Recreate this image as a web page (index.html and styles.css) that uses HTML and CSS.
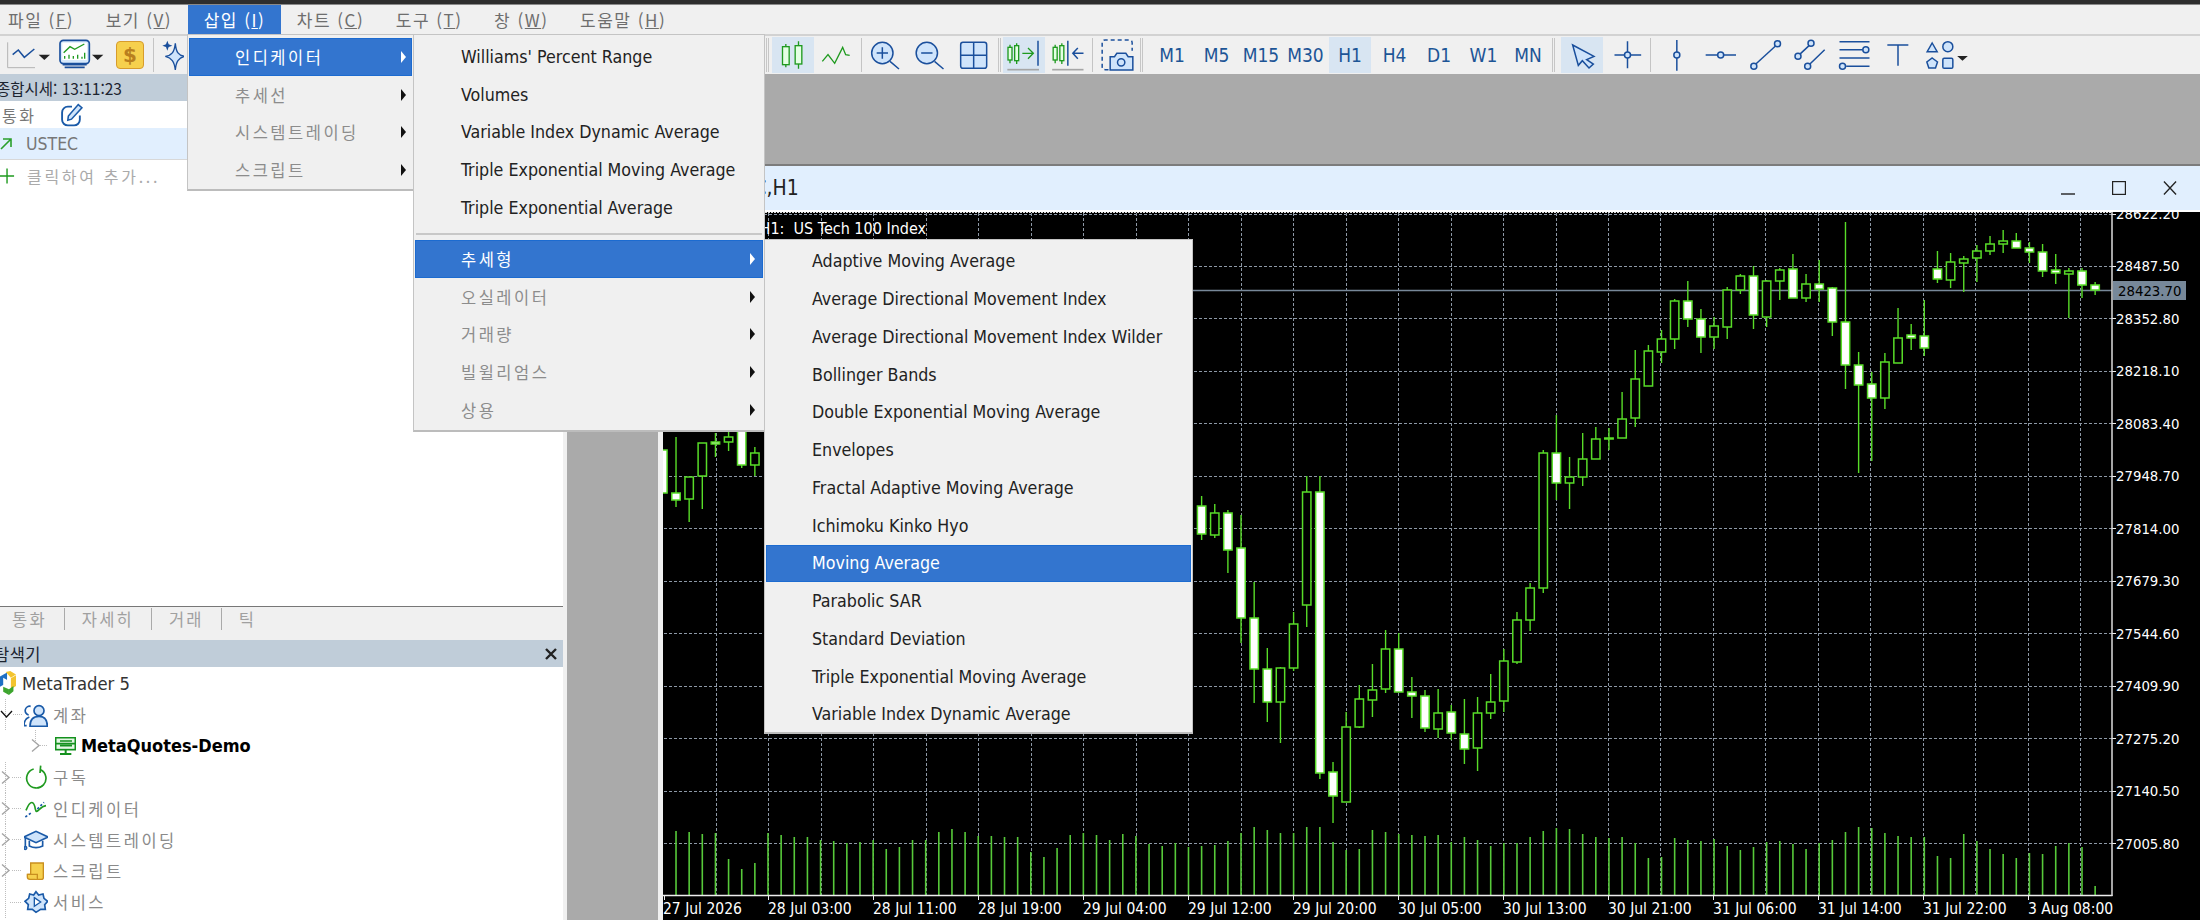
FILE: index.html
```html
<!DOCTYPE html>
<html lang="ko">
<head>
<meta charset="utf-8">
<title>MetaTrader 5</title>
<link rel="stylesheet" href="styles.css">
</head>
<body>
<div class="topstrip"></div>
<nav class="menubar">
  <span class="mb first">파일 (<u>F</u>)</span>
  <span class="mb">보기 (<u>V</u>)</span>
  <span class="mb active">삽입 (<u>I</u>)</span>
  <span class="mb">차트 (<u>C</u>)</span>
  <span class="mb">도구 (<u>T</u>)</span>
  <span class="mb">창 (<u>W</u>)</span>
  <span class="mb">도움말 (<u>H</u>)</span>
</nav>

<div class="toolbar">
  <div class="tb-left">
    <svg class="lt-a" viewBox="18 9 138 105"><path d="M23 25V101H105" class="ax"/><path d="M38 62L55 48L73 70L103 45" class="bl"/><path d="M116 62H150L133 78Z" class="tri"/></svg>
    <svg class="lt-a" viewBox="174 9 138 105"><rect x="180" y="19" width="88" height="70" rx="10" class="mon"/><rect x="187" y="26" width="74" height="52" class="wh"/><path d="M191 56L210 38L224 46L253 30" class="gr"/><path d="M194 74V66M207 74V62M220 74V66M233 74V62M246 74V68M254 74V56" class="gr"/><path d="M188 92H260M194 100H254" class="dk"/><path d="M276 62H310L293 78Z" class="tri"/></svg>
    <div class="dollar">$</div>
    <i class="sep sep-lt"></i>
    <svg class="lt-star" viewBox="495 9 66 105"><path d="M535 28C537 55 545 64 562 67C545 72 537 82 535 108C532 82 524 72 505 67C524 64 532 55 535 28Z" class="star"/><path d="M511 20L515 31L526 35L515 39L511 50L507 39L496 35L507 31Z" class="star2"/></svg>
  </div>
  <div class="tb-right">
    <i class="grip"></i>
    <div class="tool on"><svg viewBox="22.5 9 126 108"><path d="M64 30V100M102 22V104" class="gr"/><rect x="54" y="38" width="20" height="54" class="cd"/><rect x="92" y="35" width="20" height="55" class="cd"/></svg></div>
    <div class="tool"><svg viewBox="156 9 126 108"><path d="M175 82L192 62L212 88L236 40L245 62L257 64" class="gr"/></svg></div>
    <i class="sep"></i>
    <div class="tool"><svg viewBox="300 9 126 108"><circle cx="355" cy="57" r="32" class="bf"/><path d="M355 40V74M338 57H372M378 82L405 105" class="bl"/></svg></div>
    <div class="tool"><svg viewBox="433.5 9 126 108"><circle cx="487" cy="57" r="32" class="bf"/><path d="M470 57H504M510 82L537 105" class="bl"/></svg></div>
    <div class="tool"><svg viewBox="567 9 126 108"><rect x="590" y="25" width="78" height="78" rx="7" class="bf"/><path d="M629 25V103M590 64H668" class="bl"/></svg></div>
    <i class="grip"></i>
    <div class="tool on"><svg viewBox="717 9 126 108"><path d="M738 32V88M758 28V90" class="gr"/><rect x="732" y="40" width="12" height="38" class="cd"/><rect x="752" y="35" width="12" height="45" class="cd"/><path d="M775 58H808M792 42L808 58L792 74" class="gr"/><path d="M822 20V95" class="bl"/><path d="M730 107H825" class="und"/></svg></div>
    <div class="tool"><svg viewBox="850.5 9 126 108"><path d="M872 32V88M892 28V90" class="gr"/><rect x="866" y="40" width="12" height="38" class="cd"/><rect x="886" y="35" width="12" height="45" class="cd"/><path d="M910 20V95M957 58H925M940 42L925 58L940 74" class="bl"/><path d="M863 107H957" class="und"/></svg></div>
    <i class="sep"></i>
    <div class="tool"><svg viewBox="994.5 9 126 108"><path d="M1032 107H1022Q1013 107 1013 98V27Q1013 18 1022 18H1094Q1103 18 1103 27V50" class="dash"/><path d="M1037 68H1050L1057 58H1084L1091 68H1105V108H1037Z" class="bf"/><circle cx="1070" cy="85" r="11" class="bl"/></svg></div>
    <i class="grip"></i>
    <div class="tf">M1</div><div class="tf">M5</div><div class="tf">M15</div><div class="tf">M30</div><div class="tf on">H1</div><div class="tf">H4</div><div class="tf">D1</div><div class="tf">W1</div><div class="tf">MN</div>
    <i class="grip"></i>
    <div class="tool on cursor"><svg viewBox="21 9 126 108"><path d="M56 33L120 67L98 77L118 90L105 102L85 80L73 94Z" class="bf"/></svg></div>
    <div class="tool"><svg viewBox="154.5 9 126 108"><path d="M180 63H260M219 22V103" class="bl"/><circle cx="219" cy="63" r="9" class="bf"/></svg></div>
    <i class="sep"></i>
    <div class="tool"><svg viewBox="298.5 9 126 108"><path d="M367 18V110" class="bl"/><circle cx="367" cy="63" r="9" class="bf"/></svg></div>
    <div class="tool"><svg viewBox="432 9 126 108"><path d="M455 63H546" class="bl"/><circle cx="500" cy="63" r="9" class="bf"/></svg></div>
    <div class="tool"><svg viewBox="565.5 9 126 108"><path d="M604 90L663 36" class="bl"/><circle cx="598" cy="97" r="9" class="bf"/><circle cx="669" cy="29" r="9" class="bf"/></svg></div>
    <div class="tool"><svg viewBox="699 9 126 108"><path d="M737 61L766 34M767 91L812 47" class="bl"/><circle cx="732" cy="67" r="9" class="bf"/><circle cx="771" cy="28" r="9" class="bf"/><circle cx="761" cy="97" r="9" class="bf"/></svg></div>
    <div class="tool"><svg viewBox="832.5 9 126 108"><path d="M855 23H945M855 47H925M855 72H945M875 97H945" class="bl"/><circle cx="934" cy="47" r="9" class="bf"/><circle cx="864" cy="97" r="9" class="bf"/></svg></div>
    <div class="tool"><svg viewBox="966 9 126 108"><path d="M1000 33H1063M1032 33V95" class="bl"/></svg></div>
    <div class="tool wide"><svg viewBox="1099.5 9 156 108"><path d="M1133 27L1148 53H1118Z" class="bf"/><circle cx="1180" cy="38" r="15" class="bf"/><path d="M1133 72L1149 84L1143 102H1123L1117 84Z" class="bf"/><rect x="1165" y="73" width="30" height="30" rx="4" class="bf"/><path d="M1208 66H1240L1224 80Z" class="tri"/></svg></div>
  </div>
</div>

<div class="work">
  <aside class="side">
    <section class="quotes">
      <header class="band">종합시세: 13:11:23</header>
      <div class="q-head"><span class="ko">통화</span>
        <svg class="pencil" viewBox="0 0 22 23"><path d="M11 3.500H7A5.500 5.500 0 0 0 1.500 9V16A5.500 5.500 0 0 0 7 21.500H13A5.500 5.500 0 0 0 18.500 16V12" class="pen"/><path d="M17 1.500L20.500 4.500L10.500 15.500L7 16.500L7.500 12.500Z" class="penb"/></svg>
      </div>
      <div class="q-row"><svg class="trend" viewBox="0 0 13 13"><path d="M1 12L11 2M3 2H11V10" class="up"/></svg><span>USTEC</span></div>
      <div class="q-add"><svg class="plus" viewBox="0 0 16 16"><path d="M0 8H15M7.500 0V16" class="plusp"/></svg><span class="ko">클릭하여 추가...</span></div>
    </section>
    <div class="tabs">
      <span class="tab t1">통화</span><span class="tab t2">자세히</span><span class="tab t3">거래</span><span class="tab t4">틱</span>
    </div>
    <section class="nav">
      <header class="band nav-head"><span>탐색기</span><svg class="navx" viewBox="0 0 12 12"><path d="M1 1L11 11M11 1L1 11" class="xp"/></svg></header>
      <div class="row root">
        <svg class="logo" viewBox="0 15 50 75"><path d="M0 32L22 20V52L0 64Z" class="lg-b"/><path d="M18 18L32 15L50 26L34 36Z" class="lg-y"/><path d="M34 38L50 28V62L34 72Z" class="lg-y"/><path d="M10 64L28 72V90L10 80Z" class="lg-g"/><path d="M28 72L42 62V78L28 90Z" class="lg-g"/><path d="M10 36L24 44V66L10 58Z" class="lg-w"/></svg>
        <span class="dark">MetaTrader 5</span>
      </div>
      <div class="row">
        <svg class="twig" viewBox="0 0 24 31.300"><path d="M5.500 0V31.300M13 15.500H22" class="dots"/><path d="M1 12L6.500 18L12 12" class="chev-o"/></svg>
        <svg class="ico" viewBox="72 112 72 72"><circle cx="117" cy="135" r="15" class="u1"/><path d="M90 182Q90 152 117 152Q142 152 142 182Z" class="u1"/><path d="M92 122A13 13 0 0 0 86 148M80 180H72Q72 160 88 154" class="u2"/></svg>
        <span class="ko">계좌</span>
      </div>
      <div class="row sub">
        <svg class="twig" viewBox="0 0 24 31.300"><path d="M5.500 0V14M10 15.500H18" class="dots"/><path d="M2 9.500L9 15.500L2 21.500" class="chev"/></svg>
        <svg class="srv" viewBox="165 215 63 54"><rect x="167" y="217" width="59" height="36" class="sv"/><path d="M180 227H216M180 241H216M167 235H226" class="svl"/><path d="M197 253V263M180 266H214" class="svs"/></svg>
        <span class="bold">MetaQuotes-Demo</span>
      </div>
      <div class="row">
        <svg class="twig" viewBox="0 0 24 31.300"><path d="M5.500 0V31.300M12 15.500H22" class="dots"/><path d="M2 9.500L9 15.500L2 21.500" class="chev"/></svg>
        <svg class="ico" viewBox="72 302 72 72"><path d="M101 314A29 29 0 1 0 122 316M122 304L120 326" class="arcg"/></svg>
        <span class="ko">구독</span>
      </div>
      <div class="row">
        <svg class="twig" viewBox="0 0 24 31.300"><path d="M5.500 0V31.300M12 15.500H22" class="dots"/><path d="M2 9.500L9 15.500L2 21.500" class="chev"/></svg>
        <svg class="ico" viewBox="72 392 72 72"><path d="M78 432C92 398 102 405 106 428C110 448 118 420 138 418" class="arcg"/><path d="M76 452L96 438M112 428L132 408" class="dashb"/></svg>
        <span class="ko">인디케이터</span>
      </div>
      <div class="row">
        <svg class="twig" viewBox="0 0 24 31.300"><path d="M5.500 0V31.300M12 15.500H22" class="dots"/><path d="M2 9.500L9 15.500L2 21.500" class="chev"/></svg>
        <svg class="ico" viewBox="72 488 72 72"><path d="M72 515L108 498L144 515L108 532Z" class="bf2"/><path d="M88 526V542Q108 552 128 542V526" class="bl2"/><path d="M76 517V542" class="bl2"/><circle cx="76" cy="548" r="4" class="bf2"/></svg>
        <span class="ko">시스템트레이딩</span>
      </div>
      <div class="row">
        <svg class="twig" viewBox="0 0 24 31.300"><path d="M5.500 0V31.300M12 15.500H22" class="dots"/><path d="M2 9.500L9 15.500L2 21.500" class="chev"/></svg>
        <svg class="ico" viewBox="68 580 72 72"><path d="M88 592H126V636Q126 641 120 641H86Q78 641 78 634V626H88Z" class="scr"/><path d="M78 626H108V641" class="scr"/></svg>
        <span class="ko">스크립트</span>
      </div>
      <div class="row">
        <svg class="twig" viewBox="0 0 24 31.300"><path d="M5.500 0V31.300M10 15.500H22" class="dots"/></svg>
        <svg class="ico" viewBox="70 669 72 72"><path d="M106 674L114 684L127 681L130 694L141 703L132 713L134 727L120 727L106 736L95 727L81 727L83 713L73 703L84 694L87 681L99 684Z" class="bf2"/><path d="M101 692L120 705L101 718Z" class="bf3"/></svg>
        <span class="ko">서비스</span>
      </div>
    </section>
  </aside>
  <i class="splitter"></i>
  <main class="mdi">
    <div class="win">
      <div class="win-title">
        <span class="win-name">USTEC,H1</span>
        <div class="win-btns">
          <svg viewBox="0 0 14 14"><path d="M0 13H14" class="wb"/></svg>
          <svg viewBox="0 0 14 14"><rect x="0.500" y="0.500" width="13" height="13" class="wb"/></svg>
          <svg viewBox="0 0 15 14"><path d="M1 0L14 14M14 0L1 14" class="wb"/></svg>
        </div>
      </div>
      <svg class="chart" viewBox="663 212 1537 708">
        <g id="plot"></g>
        <text x="926" y="234" text-anchor="end" class="ct">USTEC,H1:&#160; US Tech 100 Index</text>
        <g class="ct cp">
          <text x="2116" y="219">28622.20</text>
          <text x="2116" y="271">28487.50</text>
          <text x="2116" y="324">28352.80</text>
          <text x="2116" y="376">28218.10</text>
          <text x="2116" y="429">28083.40</text>
          <text x="2116" y="481">27948.70</text>
          <text x="2116" y="534">27814.00</text>
          <text x="2116" y="586">27679.30</text>
          <text x="2116" y="639">27544.60</text>
          <text x="2116" y="691">27409.90</text>
          <text x="2116" y="744">27275.20</text>
          <text x="2116" y="796">27140.50</text>
          <text x="2116" y="849">27005.80</text>
        </g>
        <rect x="2113" y="281" width="73" height="19" class="plabel"/>
        <text x="2118" y="296" class="cb">28423.70</text>
        <g class="ct">
          <text x="663" y="914">27 Jul 2026</text>
          <text x="768" y="914">28 Jul 03:00</text>
          <text x="873" y="914">28 Jul 11:00</text>
          <text x="978" y="914">28 Jul 19:00</text>
          <text x="1083" y="914">29 Jul 04:00</text>
          <text x="1188" y="914">29 Jul 12:00</text>
          <text x="1293" y="914">29 Jul 20:00</text>
          <text x="1398" y="914">30 Jul 05:00</text>
          <text x="1503" y="914">30 Jul 13:00</text>
          <text x="1608" y="914">30 Jul 21:00</text>
          <text x="1713" y="914">31 Jul 06:00</text>
          <text x="1818" y="914">31 Jul 14:00</text>
          <text x="1923" y="914">31 Jul 22:00</text>
          <text x="2028" y="914">3 Aug 08:00</text>
        </g>
      </svg>
    </div>
  </main>
</div>

<div class="menu m-a">
  <div class="mi hi ko"><span>인디케이터</span><b class="arr"></b></div>
  <div class="mi off ko"><span>추세선</span><b class="arr"></b></div>
  <div class="mi off ko"><span>시스템트레이딩</span><b class="arr"></b></div>
  <div class="mi off ko"><span>스크립트</span><b class="arr"></b></div>
</div>
<div class="menu m-b">
  <div class="mi"><span>Williams' Percent Range</span></div>
  <div class="mi"><span>Volumes</span></div>
  <div class="mi"><span>Variable Index Dynamic Average</span></div>
  <div class="mi"><span>Triple Exponential Moving Average</span></div>
  <div class="mi"><span>Triple Exponential Average</span></div>
  <hr class="msep">
  <div class="mi hi ko"><span>추세형</span><b class="arr"></b></div>
  <div class="mi off ko"><span>오실레이터</span><b class="arr"></b></div>
  <div class="mi off ko"><span>거래량</span><b class="arr"></b></div>
  <div class="mi off ko"><span>빌윌리엄스</span><b class="arr"></b></div>
  <div class="mi off ko"><span>상용</span><b class="arr"></b></div>
</div>
<div class="menu m-c">
  <div class="mi"><span>Adaptive Moving Average</span></div>
  <div class="mi"><span>Average Directional Movement Index</span></div>
  <div class="mi"><span>Average Directional Movement Index Wilder</span></div>
  <div class="mi"><span>Bollinger Bands</span></div>
  <div class="mi"><span>Double Exponential Moving Average</span></div>
  <div class="mi"><span>Envelopes</span></div>
  <div class="mi"><span>Fractal Adaptive Moving Average</span></div>
  <div class="mi"><span>Ichimoku Kinko Hyo</span></div>
  <div class="mi hi"><span>Moving Average</span></div>
  <div class="mi"><span>Parabolic SAR</span></div>
  <div class="mi"><span>Standard Deviation</span></div>
  <div class="mi"><span>Triple Exponential Moving Average</span></div>
  <div class="mi"><span>Variable Index Dynamic Average</span></div>
</div>
<script src="chart.js"></script>
</body>
</html>
```
FILE: styles.css
```css
* { box-sizing: border-box; }
html, body { margin: 0; height: 920px; overflow: hidden; }
body {
  width: 2200px; position: relative; background: #f0f0f0; color: #222;
  font-family: "DejaVu Sans Condensed", "DejaVu Sans", "Noto Sans CJK KR", sans-serif;
  font-stretch: condensed; font-size: 15.5px;
}
.ko, .mb, .band, .tab { font-family: "Noto Sans CJK KR", "DejaVu Sans", sans-serif; font-stretch: normal; }
i { display: block; }
svg { display: block; flex: none; }

.topstrip { height: 5px; background: #2e2e2e; border-bottom: 1px solid #8a8a8a; }
.menubar { height: 29px; display: flex; background: #f0f0f0; padding-left: 0; }
.mb { display: flex; align-items: center; padding: 0 15.800px; color: #6e6e6e; font-size: 17px; letter-spacing: 1.5px; white-space: pre; }
.mb.first { padding-left: 8px; padding-right: 16px; }
.mb.active { background: #3375cf; color: #fff; }

.toolbar { height: 40px; display: flex; background: #f0f0f0; border-top: 2px solid #d2d2d2; padding-top: 1px; }
.tb-left { width: 765px; flex: none; display: flex; align-items: flex-start; padding-left: 6px; }
.lt-a { width: 46px; height: 35px; margin-right: 6px; }
.lt-a + .dollar { margin-left: 6px; }
.dollar { width: 28px; height: 28px; margin-top: 4px; border-radius: 4px; background: #f6d04d; border: 1.5px solid #d79c2c; color: #b97f1e; display: flex; align-items: center; justify-content: center; font: 700 20px "DejaVu Sans", sans-serif; }
.sep-lt { margin-left: 9px; margin-right: 8px; }
.lt-star { width: 22px; height: 35px; }
.tb-right { flex: 1; display: flex; gap: 2.500px; align-items: flex-start; padding-left: 1px; }
.grip { width: 3px; height: 34px; border-left: 1px solid #c6c6c6; border-right: 1px solid #c6c6c6; margin-top: 1px; }
.sep { width: 1px; height: 34px; margin-top: 1px; background: #c4c4c4; }
.tool, .tf { width: 42px; height: 36px; flex: none; }
.tool svg { width: 42px; height: 36px; }
.tool.wide { width: 52px; }
.tool.wide svg { width: 52px; }
.tool.on, .tf.on { background: #d8e5f2; }
.tool.cursor { margin-left: 4px; }
.tf { display: flex; align-items: center; justify-content: center; color: #1d5596; font-size: 19px; }
.grip + .tf { margin-left: 5.500px; }

/* svg paint classes */
svg path, svg circle, svg rect { fill: none; }
.gr { stroke: #1f9a1f; stroke-width: 4; }
.dk { stroke: #1a4f9c; stroke-width: 5; }
.bl { stroke: #1a4f9c; stroke-width: 4.500; }
.ax { stroke: #b4b4b4; stroke-width: 3; }
.tri { fill: #222 !important; }
.mon { fill: #d7e9fb !important; stroke: #1a4f9c; stroke-width: 5; }
.wh { fill: #fff !important; }
.cd { fill: #e4ffe4 !important; stroke: #1f9a1f; stroke-width: 4; }
.bf { fill: #cfe4fb !important; stroke: #1a4f9c; stroke-width: 4.500; }
.und { stroke: #a6a6a6; stroke-width: 5; }
.dash { stroke: #1a4f9c; stroke-width: 4.500; stroke-dasharray: 12 9; }
.star { fill: #cfe4fb !important; stroke: #1a4f9c; stroke-width: 4; }
.star2 { fill: #1a4f9c !important; }

.work { height: 846px; display: flex; }
.side { width: 563px; flex: none; display: flex; flex-direction: column; background: #fff; overflow: hidden; }
.quotes { flex: 1; }
.band { height: 27px; background: #c0cdd9; display: flex; align-items: center; color: #1c2430; font-size: 15.5px; margin-left: -4px; padding-left: 0; }
.q-head { height: 27px; display: flex; align-items: center; gap: 24px; color: #777; padding-left: 2px; letter-spacing: 2.500px; font-size: 16px; }
.pencil { width: 24px; height: 24px; }
.pen { stroke: #1a5aa8; stroke-width: 1.800; }
.penb { stroke: #1a5aa8; stroke-width: 1.500; fill: #cfe4fb !important; }
.q-row { height: 32px; display: flex; align-items: center; background: #e1effe; border-bottom: 1px solid #d8d8d8; color: #777; gap: 13px; font-size: 17.5px; }
.trend { width: 13px; height: 13px; }
.up { stroke: #2ba02b; stroke-width: 1.600; }
.q-add { height: 32px; display: flex; align-items: center; gap: 12px; color: #aaa; letter-spacing: 2.700px; font-size: 16px; }
.plus { width: 15px; height: 16px; }
.plusp { stroke: #1f9a1f; stroke-width: 1.500; }

.tabs { height: 34px; flex: none; border-top: 1px solid #777; background: #f0f0f0; display: flex; align-items: flex-start; padding-top: 1px; color: #a0a0a0; }
.tab { font-size: 16.500px; letter-spacing: 2.200px; padding-right: 17px; height: 22px; display: flex; align-items: center; border-right: 1px solid #aaa; }
.tab.t1 { padding-left: 12px; }
.tab.t2, .tab.t3, .tab.t4 { padding-left: 17px; }
.tab.t4 { border-right: 0; }

.nav { height: 280px; flex: none; }
.nav-head { justify-content: space-between; padding-right: 6px; margin-left: 0; position: relative; }
.nav-head span { margin-left: -6px; letter-spacing: .5px; font-size: 16.5px; }
.navx { width: 12px; height: 12px; }
.xp { stroke: #222; stroke-width: 2.400; }
.row { height: 31.300px; display: flex; align-items: center; color: #8a8a8a; font-size: 15.500px; }
.row .ko { margin-left: 5px; letter-spacing: 2.500px; font-size: 16.500px; }
.row.root { padding-left: 0; gap: 6px; height: 32px; }
.row.sub { padding-left: 30px; }
.dark { color: #333; font-size: 18.300px; }
.bold { color: #000; font-weight: 700; font-size: 18px; margin-left: 5px; }
.logo { width: 16px; height: 24px; }
.twig { width: 24px; height: 31.300px; }
.ico { width: 24px; height: 24px; }
.srv { width: 21px; height: 18px; margin-left: 1px; }
.dots { stroke: #bdbdbd; stroke-width: 1; stroke-dasharray: 1 1; }
.chev { stroke: #a4a4a4; stroke-width: 1.400; }
.chev-o { stroke: #111; stroke-width: 1.300; }
.u1 { stroke: #1a5aa8; stroke-width: 5; fill: #cfe4fb !important; }
.u2 { stroke: #1a5aa8; stroke-width: 5; }
.sv { fill: #e6f7e6 !important; stroke: #14911e; stroke-width: 5; }
.svl { stroke: #14911e; stroke-width: 5; }
.svs { stroke: #14911e; stroke-width: 6; }
.arcg { stroke: #1f9a1f; stroke-width: 5; }
.dashb { stroke: #1a5aa8; stroke-width: 5; stroke-dasharray: 7 6; }
.bf2 { fill: #cfe4fb !important; stroke: #1a5aa8; stroke-width: 5; }
.bl2 { stroke: #1a5aa8; stroke-width: 5; }
.bf3 { stroke: #1a5aa8; stroke-width: 4; fill: #fff !important; }
.scr { fill: #f6d04d !important; stroke: #c98f1f; stroke-width: 4; }
.lg-b { fill: #1e6fc4 !important; }
.lg-y { fill: #f3c42f !important; }
.lg-g { fill: #3da52e !important; }
.lg-w { fill: #fff !important; }

.splitter { width: 4px; flex: none; background: #f0f0f0; }
.mdi { flex: 1; background: #aaa; position: relative; overflow: hidden; }
.win { position: absolute; left: 91px; top: 90px; right: 0; bottom: 0; background: #f0f0f0; border-top: 2px solid #7c7c7c; padding-left: 5px; display: flex; flex-direction: column; }
.win-title { height: 46px; flex: none; margin-left: -5px; background: #e1effe; border-bottom: 2px solid #fff; display: flex; align-items: center; justify-content: space-between; padding: 0 23px 0 46px; }
.win-name { font-size: 21px; color: #222; }
.win-btns { display: flex; gap: 37px; }
.win-btns svg { width: 14px; height: 14px; }
.wb { stroke: #222; stroke-width: 1.400; }
.chart { width: 1537px; height: 708px; background: #000; flex: none; }
.ct, .ct text { fill: #fff; font-size: 15.500px; }
.ct.cp text { font-size: 14.800px; }
text.ct { font-size: 16px; }
.cb { fill: #000; font-size: 14.800px; }
.plabel { fill: #778899 !important; }
.cw { fill: #fff !important; stroke: #58dc28; stroke-width: 1.500; }
.cg { fill: #000 !important; stroke: #58dc28; stroke-width: 1.500; }

.menu { position: absolute; background: #f0f0f0; border: 1px solid #c4c4c4; border-bottom: 2px solid #bcbcbc; padding: 3px 1px 0; display: flex; flex-direction: column; }
.m-a { left: 187px; top: 34px; width: 227px; height: 157px; }
.m-b { left: 413px; top: 34px; width: 352px; height: 398px; }
.m-c { left: 764px; top: 239px; width: 429px; height: 495px; padding-top: 2.500px; }
.mi { height: 37.800px; flex: none; display: flex; align-items: center; justify-content: space-between; color: #222; padding: 0 8px 0 46px; font-size: 17.700px; }
.m-a .mi { padding-right: 6px; }
.m-c .mi { height: 37.750px; }
.mi.ko { letter-spacing: 2.500px; font-size: 16.500px; }
.mi.off { color: #8c8c8c; }
.mi.hi { background: #3375cf; color: #fff; box-shadow: inset 0 0 0 1px #1c6bd0; }
.arr { width: 0; height: 0; border-left: 5px solid #111; border-top: 6px solid transparent; border-bottom: 6px solid transparent; }
.hi .arr { border-left-color: #fff; }
.msep { border: 0; margin: 6px 1px 5px; height: 2px; background: #c8c8c8; flex: none; width: auto; align-self: stretch; }
```
FILE: chart.js
```js
// Chart data: [bar index, 'G' hollow | 'W' filled, body top, body bottom, wick top, wick bottom]
var candles = [
[-8,'W',450,493,450,493],[-7,'W',493,500,437,507],[-6,'G',477,499,477,522],[-5,'G',443,476,443,509],[-4,'W',442,444,433,457],[-3,'G',437,442,431,451],[-2,'W',420,465,420,468],[-1,'G',453,465,447,476],
[33,'W',506,534,496,540],[34,'G',513,535,504,538],[35,'W',513,550,510,573],[36,'W',548,618,515,643],[37,'W',618,669,582,703],[38,'W',669,702,648,722],[39,'G',668,702,667,743],[40,'G',624,668,612,671],[41,'G',492,605,476,627],[42,'W',492,773,476,779],[43,'W',772,796,762,823],[44,'G',727,802,712,802],[45,'G',699,727,685,728],[46,'G',690,700,664,717],[47,'G',649,689,630,693],[48,'W',649,692,633,692],[49,'W',692,696,677,718],[50,'W',696,728,690,732],[51,'G',713,729,689,738],[52,'W',712,733,705,740],[53,'W',734,749,699,764],[54,'G',713,748,697,771],[55,'G',702,713,674,719],[56,'G',661,701,649,712],[57,'G',620,662,612,664],[58,'G',588,620,583,631],[59,'G',453,588,450,593],[60,'W',453,483,415,500],[61,'G',477,483,457,509],[62,'G',459,477,433,486],[63,'G',439,459,427,459],[64,'W',438,439,428,450],[65,'G',419,438,392,438],[66,'G',379,418,350,427],[67,'G',351,386,345,386],[68,'G',339,352,330,363],[69,'G',301,339,299,349],[70,'W',301,319,281,327],[71,'W',319,337,309,353],[72,'G',326,337,317,349],[73,'G',290,327,287,339],[74,'G',276,290,274,294],[75,'W',276,315,266,329],[76,'G',281,317,280,327],[77,'G',270,281,268,300],[78,'W',269,298,254,298],[79,'G',284,298,274,302],[80,'W',284,289,260,302],[81,'W',288,322,287,336],[82,'W',322,365,222,389],[83,'W',365,385,352,473],[84,'W',384,398,372,461],[85,'G',362,398,353,409],[86,'G',338,363,308,363],[87,'W',335,338,324,350],[88,'W',336,348,300,356],[89,'W',269,279,251,283],[90,'G',262,280,253,288],[91,'G',259,263,256,292],[92,'G',251,258,245,282],[93,'G',244,251,236,255],[94,'G',241,244,230,253],[95,'W',241,248,233,248],[96,'W',248,252,242,263],[97,'W',252,271,244,277],[98,'W',270,273,254,284],[99,'G',271,274,268,318],[100,'W',271,285,268,298],[101,'W',285,290,282,295]
];
var volumes = [831,832,834,833,859,869,863,833,835,837,837,840,841,843,842,840,849,847,840,840,832,829,832,836,836,837,837,852,857,848,835,833,835,840,834,836,844,846,843,
847,846,845,841,833,827,830,833,833,827,827,842,850,849,830,832,834,835,836,835,842,837,840,846,843,843,837,831,828,829,834,837,838,837,843,858,857,838,840,841,839,846,850,847,842,841,844,849,843,840,832,827,828,833,836,837,837,856,858,834,841,849,854,858,853,854,846,843,847,886];

function barX(k) { return 768 + 13.14 * k; }

var html = '';
var GRID = 'stroke="#8d98a6" stroke-width="1" stroke-dasharray="3 2" shape-rendering="crispEdges"';
for (var n = 0; n < 27; n++) {
  var gx = Math.round(716 + 52.47 * n) + 0.5;
  html += '<line x1="' + gx + '" x2="' + gx + '" y1="213" y2="895" ' + GRID + '/>';
}
for (var m = 0; m < 13; m++) {
  var gy = Math.round(213.5 + 52.47 * m) + 0.5;
  html += '<line x1="664" x2="2112" y1="' + gy + '" y2="' + gy + '" ' + GRID + '/>';
  html += '<line x1="2112" x2="2116" y1="' + gy + '" y2="' + gy + '" stroke="#eee"/>';
}
html += '<line x1="664" x2="2112" y1="290.5" y2="290.5" stroke="#778899" stroke-width="1.5"/>';
for (var i = 0; i < volumes.length; i++) {
  var vx = barX(i - 7);
  html += '<line x1="' + vx + '" x2="' + vx + '" y1="' + volumes[i] + '" y2="895" stroke="#57c93a" stroke-width="1.6"/>';
}
candles.forEach(function (c) {
  var x = barX(c[0]);
  html += '<line x1="' + x + '" x2="' + x + '" y1="' + c[4] + '" y2="' + c[5] + '" stroke="#58dc28" stroke-width="1.4"/>';
  html += '<rect x="' + (x - 4.2) + '" y="' + c[2] + '" width="8.4" height="' + (c[3] - c[2]) + '" class="' +
    (c[1] === 'W' ? 'cw' : 'cg') + '"/>';
});
html += '<line x1="663" x2="2112" y1="212.5" y2="212.5" stroke="#ddd" stroke-dasharray="2 1"/>';
html += '<line x1="663" x2="2112.5" y1="895.5" y2="895.5" stroke="#eee" stroke-width="1.5"/>';
html += '<line x1="2112" x2="2112" y1="212" y2="896" stroke="#ddd" stroke-width="1.5"/>';
for (var t = 0; t < 14; t++) {
  var tx = Math.round(663 + 105 * t + (t ? 0 : 1)) + 0.5;
  html += '<line x1="' + tx + '" x2="' + tx + '" y1="896" y2="900" stroke="#eee"/>';
}
document.getElementById('plot').innerHTML = html;
```
